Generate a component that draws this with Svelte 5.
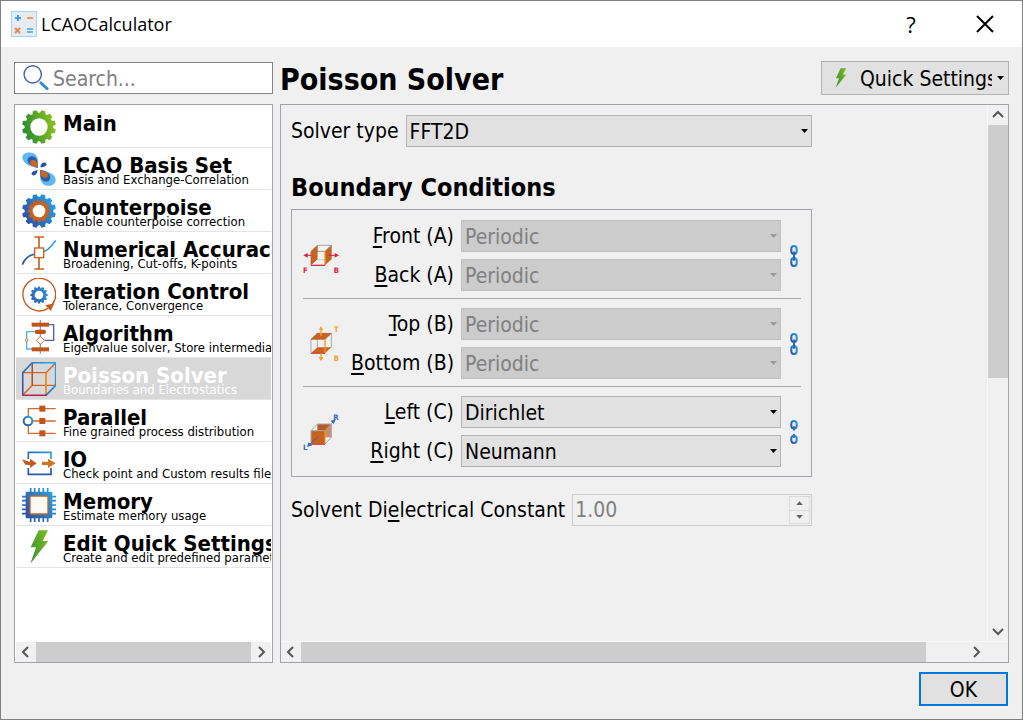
<script>
  const gear = (cx, cy, inner, outer, teeth, phase = 0) => {
    const step = (Math.PI * 2) / teeth;
    const profile = [[-0.38, inner], [-0.22, outer], [0.22, outer], [0.38, inner]];
    const points = [];
    for (let i = 0; i < teeth; i++) {
      for (const [offset, r] of profile) {
        const a = (i + offset + phase) * step - Math.PI / 2;
        points.push(`${(cx + r * Math.cos(a)).toFixed(1)} ${(cy + r * Math.sin(a)).toFixed(1)}`);
      }
    }
    return `M${points.join('L')}Z`;
  };
  const hole = (c, r) => `M${c - r} ${c}a${r} ${r} 0 1 0 ${2 * r} 0a${r} ${r} 0 1 0 ${-2 * r} 0Z`;

  const pages = [
    { id: 'main', title: 'Main', note: '' },
    { id: 'basis', title: 'LCAO Basis Set', note: 'Basis and Exchange-Correlation' },
    { id: 'counterpoise', title: 'Counterpoise', note: 'Enable counterpoise correction' },
    { id: 'accuracy', title: 'Numerical Accuracy', note: 'Broadening, Cut-offs, K-points' },
    { id: 'iteration', title: 'Iteration Control', note: 'Tolerance, Convergence' },
    { id: 'algorithm', title: 'Algorithm', note: 'Eigenvalue solver, Store intermediate' },
    { id: 'poisson', title: 'Poisson Solver', note: 'Boundaries and Electrostatics' },
    { id: 'parallel', title: 'Parallel', note: 'Fine grained process distribution' },
    { id: 'io', title: 'IO', note: 'Check point and Custom results files' },
    { id: 'memory', title: 'Memory', note: 'Estimate memory usage' },
    { id: 'quick', title: 'Edit Quick Settings', note: 'Create and edit predefined parameters' }
  ];
  let selected = $state('poisson');

  const groups = [
    { axis: 'A', linked: true, sides: [['Front', 'Periodic'], ['Back', 'Periodic']] },
    { axis: 'B', linked: true, sides: [['Top', 'Periodic'], ['Bottom', 'Periodic']] },
    { axis: 'C', linked: false, sides: [['Left', 'Dirichlet'], ['Right', 'Neumann']] }
  ];
  const conditions = ['Periodic', 'Dirichlet', 'Neumann'];
</script>

{#snippet chevron(d)}
  <svg class="chev" viewBox="0 0 12 12" aria-hidden="true"><path {d} /></svg>
{/snippet}

{#snippet bolt()}
  <path d="M50 1H78L62 33H79L25 101L42 52H26Z" fill="url(#green)" />
{/snippet}

{#snippet pageIcon(id)}
  <svg class="page-icon" viewBox="0 0 102 102" aria-hidden="true">
    {#if id === 'main'}
      <path d={gear(51, 51, 43, 51, 12, 0.5) + hole(51, 26)} fill="url(#green)" fill-rule="evenodd" />
    {:else if id === 'basis'}
      <path d="M48 48C26 45 2 34 1 17C0 4 18-2 33 3C50 10 49 30 48 48Z" fill="#5fb8ee" />
      <path d="M47 47C28 43 14 34 17 21C21 10 39 10 44 22C47 30 47 38 47 47Z" fill="#2c5dad" />
      <path d="M47 47C30 43 21 38 25 29C30 21 43 24 45 33Z" fill="#cf6321" />
      <path d="M54 53C76 56 101 66 101 84C101 98 85 105 70 100C52 92 53 72 54 53Z" fill="#5fb8ee" />
      <path d="M55 54C76 58 88 67 84 81C80 92 64 91 58 80C54 72 55 63 55 54Z" fill="#2c5dad" />
      <path d="M55 54C72 58 81 64 77 74C72 81 60 77 57 69Z" fill="#cf6321" />
      <path d="M55 46C56 34 64 29 72 33C78 40 67 46 55 46Z" fill="#2456a8" />
      <path d="M47 55C45 68 38 73 30 69C25 62 34 56 47 55Z" fill="#2456a8" />
      <path d="M51 39V63M40 51H63" stroke="#fff" stroke-width="4" />
    {:else if id === 'counterpoise'}
      <path d={gear(51, 51, 43, 51, 12, 0.5)} fill="url(#blue)" />
      <path d={gear(51, 51, 28, 34, 12)} fill="#c9601d" />
      <circle cx="51" cy="51" r="19" fill="#fff" />
    {:else if id === 'accuracy'}
      <path d="M1 86C12 58 33 54 50 52S85 38 101 13" fill="none" stroke="url(#blue)" stroke-width="5" />
      <path d="M51 3V99M37 3H66M37 99H66" stroke="#c9601d" stroke-width="5" />
      <rect x="38" y="36" width="27" height="29" fill="#fff" stroke="#c9601d" stroke-width="4" />
    {:else if id === 'iteration'}
      <path d="M78 91A49 49 0 1 1 91 79" fill="none" stroke="#c4591d" stroke-width="4" />
      <path d="M70 82L97 76L86 99Z" fill="#c4591d" />
      <path d={gear(51, 51, 21, 26, 12) + hole(51, 13)} fill="url(#blue)" fill-rule="evenodd" />
    {:else if id === 'algorithm'}
      <path d="M55 0V101M38 35H14V87H30" fill="none" stroke="#55aee0" stroke-width="4" />
      <path d="M68 14H95V61H68" fill="none" stroke="#4c63ad" stroke-width="4" />
      <rect x="29" y="8" width="52" height="12" fill="#c4531a" />
      <rect x="38" y="29" width="34" height="13" rx="6" fill="#c4531a" />
      <rect x="29" y="82" width="52" height="12" fill="#c4531a" />
      <path d="M55 49L67 61L55 73L43 61Z" fill="#fff" stroke="#cf6a35" stroke-width="3" />
      <circle cx="14" cy="61" r="4" fill="#fff" stroke="#cf6a35" stroke-width="3" />
    {:else if id === 'poisson'}
      <path d="M2 32H72V100M72 32L101 3M31 3V70H101M31 70L2 100" fill="none" stroke="#cf6321" stroke-width="4" />
      <path d="M31 70V3" stroke="#a65032" stroke-width="4" />
      <path d="M72 32V100" stroke="#f39a26" stroke-width="4" />
      <path d="M2 100V32L31 2H101V70L72 100" fill="none" stroke="url(#blue)" stroke-width="5" />
      <path d="M1 100H74" stroke="#b51e48" stroke-width="5" />
    {:else if id === 'parallel'}
      <path d="M19 38V14H101M30 51H101M19 64V88H101" fill="none" stroke="#cf6b39" stroke-width="4" />
      <rect x="52" y="5" width="18" height="18" fill="#c4531a" />
      <rect x="52" y="42" width="18" height="18" fill="#c4531a" />
      <rect x="52" y="79" width="18" height="18" fill="#c4531a" />
      <circle cx="18" cy="51" r="13" fill="#fff" stroke="url(#bluelink)" stroke-width="6" />
    {:else if id === 'io'}
      <path d="M19 39V19H87V39" fill="none" stroke="url(#blue)" stroke-width="5" />
      <path d="M19 66V85H87V66" fill="none" stroke="#2e55a8" stroke-width="5" />
      <path d="M0 40L24 48V38L44 52L24 66V57L10 56Z" fill="#c4591d" />
      <path d="M60 47H78V38L101 52L78 66V57H60Z" fill="#cf7422" />
    {:else if id === 'memory'}
      <path d="M26 0V102M38 0V102M51 0V102M64 0V102M77 0V102M0 26H102M0 38H102M0 51H102M0 64H102M0 77H102" stroke="url(#blueflat)" stroke-width="5" />
      <rect x="11" y="11" width="80" height="80" rx="3" fill="url(#blue)" />
      <rect x="24" y="24" width="54" height="54" rx="3" fill="#fff9f3" stroke="#c4651f" stroke-width="4" />
    {:else}
      {@render bolt()}
    {/if}
  </svg>
{/snippet}

{#snippet axisIcon(axis)}
  <svg class="axis-icon" viewBox="0 0 108 108" aria-hidden="true">
    {#if axis === 'A'}
      <path d="M43 22H85V65H43Z" fill="#f4f4f4" stroke="#a5a9ac" stroke-width="3" />
      <path d="M24 40L43 22V64L24 82Z" fill="#c8621f" />
      <path d="M66 40L85 22V64L66 82Z" fill="#c8621f" />
      <path d="M24 40H66V82H24Z" fill="#f4f4f4" fill-opacity=".5" />
      <path d="M24 82V40H66L85 22" fill="none" stroke="#8c9196" stroke-width="3" />
      <path d="M24 40L43 22V64L24 82Z" fill="#c8621f" />
      <path d="M66 40V82" stroke="#f3982a" stroke-width="4" />
      <path d="M24 82H66" stroke="#d9304b" stroke-width="4" />
      <path d="M10 52H24M76 52H96" stroke="#dc1f3c" stroke-width="3" />
      <path d="M1 52L14 45V59ZM108 52L95 45V59Z" fill="#dc1f3c" />
      <text x="0" y="105" fill="#dc1f3c">F</text><text x="92" y="105" fill="#dc1f3c">B</text>
    {:else if axis === 'B'}
      <path d="M43 22V64M24 40V82M85 22V64" stroke="#a5a9ac" stroke-width="3" />
      <path d="M24 40L43 22H85L66 40Z" fill="#c8621f" stroke="#a95727" stroke-width="2" />
      <path d="M24 82L43 64H85L66 82Z" fill="#c8621f" />
      <path d="M66 40V82" stroke="#f3982a" stroke-width="4" />
      <path d="M24 82H66" stroke="#c93a38" stroke-width="3" />
      <path d="M54 8V31M54 82V96" stroke="#f3a331" stroke-width="4" />
      <path d="M54 0L61 13H47ZM54 106L61 93H47Z" fill="#f3a331" />
      <text x="93" y="17" fill="#f3a331">T</text><text x="92" y="106" fill="#f3a331">B</text>
    {:else}
      <path d="M43 30H85V70H43Z" fill="#b85a22" />
      <path d="M24 50H66V90H24Z" fill="#c8621f" />
      <path d="M66 50L85 30V70L66 90Z" fill="#f0f0f0" fill-opacity=".35" />
      <path d="M24 50L43 30H85L66 50M85 30V70L66 90M24 90V50H66" fill="none" stroke="#a5a9ac" stroke-width="3" />
      <path d="M66 50V90" stroke="#f3982a" stroke-width="3" />
      <path d="M24 91H66" stroke="#d9304b" stroke-width="3" />
      <path d="M44 69L20 92M86 28L92 22" stroke="#40639a" stroke-width="3" />
      <path d="M12 99L17 85L28 94ZM99 14L83 21L92 30Z" fill="#346bb4" />
      <text x="0" y="107" fill="#346bb4">L</text><text x="91" y="18" fill="#346bb4">R</text>
    {/if}
  </svg>
{/snippet}

{#snippet linkIcon(linked)}
  <svg class="link-icon" viewBox="0 0 24 72" aria-hidden="true">
    {#if linked}
      <rect x="4" y="6" width="16" height="24" rx="8" fill="none" stroke="url(#bluelink)" stroke-width="6" />
      <rect x="4" y="42" width="16" height="24" rx="8" fill="none" stroke="url(#bluelink)" stroke-width="6" />
      <path d="M12 25V48" stroke="#2567b7" stroke-width="6" stroke-linecap="round" />
    {:else}
      <rect x="4" y="3" width="16" height="22" rx="8" fill="none" stroke="url(#bluelink)" stroke-width="6" />
      <rect x="4" y="47" width="16" height="22" rx="8" fill="none" stroke="url(#bluelink)" stroke-width="6" />
      <path d="M12 21V29M12 44V51" stroke="#2378c4" stroke-width="6" stroke-linecap="round" />
    {/if}
  </svg>
{/snippet}

{#snippet hbar(fill)}
  <div class="hbar">
    <button aria-label="Scroll left">{@render chevron('M8 1L3 6L8 11')}</button>
    <div class="track"><div class="thumb" style:width={fill}></div></div>
    <button aria-label="Scroll right">{@render chevron('M4 1L9 6L4 11')}</button>
  </div>
{/snippet}

<svg class="defs" aria-hidden="true">
  <defs>
    <linearGradient id="green" gradientUnits="userSpaceOnUse" x1="10" y1="60" x2="92" y2="40"><stop stop-color="#2f8f2f" /><stop offset="1" stop-color="#86bd23" /></linearGradient>
    <linearGradient id="blue" gradientUnits="userSpaceOnUse" x1="8" y1="80" x2="94" y2="22"><stop stop-color="#2d4fa5" /><stop offset="1" stop-color="#27a0e4" /></linearGradient>
    <linearGradient id="blueflat" gradientUnits="userSpaceOnUse" x1="0" y1="102" x2="102" y2="0"><stop stop-color="#2d4fa5" /><stop offset="1" stop-color="#27a0e4" /></linearGradient>
    <linearGradient id="bluelink" x1="0" y1="1" x2="1" y2="0"><stop stop-color="#2b50a6" /><stop offset="1" stop-color="#249fe2" /></linearGradient>
  </defs>
</svg>

<div class="window">
  <header>
    <svg class="app-icon" viewBox="0 0 26 26" aria-hidden="true">
      <rect x=".5" y=".5" width="25" height="25" fill="#e9eaec" stroke="#a9d3ee" />
      <path d="M1 1H13V13H1ZM13 13H25V25H13Z" fill="#e3eef6" />
      <path d="M4 7H10M7 4V10" stroke="#4b9bd8" stroke-width="2" />
      <path d="M16 7H22" stroke="#df9a70" stroke-width="2" />
      <path d="M4 17L9 22M9 17L4 22" stroke="#dd8a55" stroke-width="2" />
      <path d="M16 18H22M16 21H22" stroke="#74b2e2" stroke-width="2" />
    </svg>
    <span class="caption">LCAOCalculator</span>
    <button class="help" aria-label="Help">?</button>
    <button class="close" aria-label="Close"><svg viewBox="0 0 18 18" aria-hidden="true"><path d="M1 1L17 17M17 1L1 17" /></svg></button>
  </header>

  <main>
    <aside>
      <label class="search">
        <svg viewBox="0 0 75 75" aria-hidden="true">
          <path d="M49 49L72 71" stroke="#2b8bd2" stroke-width="8" />
          <circle cx="28" cy="27" r="25" fill="#fff" stroke="#4a62b0" stroke-width="4" />
        </svg>
        <input type="text" placeholder="Search..." aria-label="Search" />
      </label>
      <div class="list-box">
        <nav>
          {#each pages as page}
            <button class="page" class:active={selected === page.id} onclick={() => (selected = page.id)}>
              {@render pageIcon(page.id)}
              <span class="words">
                <strong>{page.title}</strong>
                <small>{page.note}</small>
              </span>
            </button>
          {/each}
        </nav>
        {@render hbar('100%')}
      </div>
    </aside>

    <section class="content">
      <div class="top">
        <h1>Poisson Solver</h1>
        <button class="quick">
          <svg class="bolt" viewBox="22 0 60 102" aria-hidden="true">{@render bolt()}</svg>
          <span>Quick Settings</span>
          <i class="arrow"></i>
        </button>
      </div>

      <div class="panel">
        <div class="view">
          <form>
            <div class="line solver">
              <label for="solver">Solver type</label>
              <div class="combo">
                <select id="solver"><option>FFT2D</option></select>
                <i class="arrow"></i>
              </div>
            </div>
            <h2>Boundary Conditions</h2>
            <div class="bounds">
              {#each groups as group}
                <div class="group">
                  {@render axisIcon(group.axis)}
                  <div class="fields">
                    {#each group.sides as [side, value]}
                      <label for={side}><u>{side[0]}</u>{side.slice(1)} ({group.axis})</label>
                      <div class="combo">
                        <select id={side} {value} disabled={group.linked}>
                          {#each conditions as condition}<option>{condition}</option>{/each}
                        </select>
                        <i class="arrow"></i>
                      </div>
                    {/each}
                  </div>
                  {@render linkIcon(group.linked)}
                </div>
              {/each}
            </div>
            <div class="line">
              <label for="dielectric">Solvent Di<u>e</u>lectrical Constant</label>
              <div class="spin">
                <input id="dielectric" type="text" value="1.00" disabled />
                <div class="steps">
                  <button type="button" disabled aria-label="Increase"><i class="arrow up"></i></button>
                  <button type="button" disabled aria-label="Decrease"><i class="arrow"></i></button>
                </div>
              </div>
            </div>
          </form>
          <div class="vbar">
            <button aria-label="Scroll up">{@render chevron('M1 8L6 3L11 8')}</button>
            <div class="track"><div class="thumb" style:height="51%"></div></div>
            <button aria-label="Scroll down">{@render chevron('M1 4L6 9L11 4')}</button>
          </div>
        </div>
        <div class="foot">{@render hbar('94%')}</div>
      </div>
    </section>
  </main>

  <footer><button class="ok">OK</button></footer>
</div>

<style>
  :global(body) {
    margin: 0;
  }
  .window,
  .window * {
    box-sizing: border-box;
  }
  .window {
    display: flex;
    flex-direction: column;
    min-height: 100vh;
    border: 1px solid #808080;
    background: #f0f0f0;
    color: #000;
    font: 21px/32px "DejaVu Sans Condensed", "DejaVu Sans", sans-serif;
  }
  .defs {
    position: absolute;
    width: 0;
    height: 0;
  }
  button,
  input,
  select {
    margin: 0;
    padding: 0;
    border: 0;
    border-radius: 0;
    background: none;
    color: inherit;
    font: inherit;
  }
  svg {
    display: block;
    flex: none;
  }

  header {
    display: flex;
    align-items: center;
    height: 46px;
    padding-left: 10px;
    background: #fff;
    font-family: "Open Sans", "Noto Sans", sans-serif;
    font-size: 18px;
  }
  .app-icon {
    width: 26px;
    height: 26px;
  }
  .caption {
    flex: 1;
    margin-left: 4px;
  }
  .help,
  .close {
    display: flex;
    align-items: center;
    justify-content: center;
    width: 74px;
    height: 46px;
    font-size: 22px;
  }
  .close svg {
    width: 18px;
    height: 18px;
    fill: none;
    stroke: #000;
    stroke-width: 2;
  }

  main {
    flex: 1;
    display: grid;
    grid-template-columns: 259px minmax(0, 1fr);
    gap: 7px;
    padding: 14px 13px 0;
  }
  aside,
  .content {
    display: flex;
    flex-direction: column;
    min-width: 0;
  }
  .search {
    display: flex;
    align-items: center;
    gap: 4px;
    height: 32px;
    margin: 1px 0 10px;
    padding-left: 8px;
    border: 1px solid #858585;
    background: #fff;
  }
  .search svg {
    width: 26px;
    height: 26px;
  }
  .search input {
    flex: 1;
    min-width: 0;
    padding-top: 2px;
    outline: 0;
  }
  .search input::placeholder {
    color: #808080;
    opacity: 1;
  }
  .list-box {
    flex: 1;
    display: flex;
    flex-direction: column;
    padding: 1px 1px 0;
    border: 1px solid #a0a3aa;
    background: #fff;
  }
  nav {
    flex: 1;
  }
  .page {
    display: flex;
    align-items: center;
    gap: 7px;
    width: 100%;
    height: 42px;
    padding-left: 6px;
    overflow: hidden;
    border-bottom: 1px solid #e4e4e4;
    text-align: left;
    white-space: nowrap;
  }
  .page.active {
    background: #d8d8d8;
    color: #fff;
  }
  .page-icon {
    width: 34px;
    height: 34px;
  }
  .words {
    display: flex;
    flex-direction: column;
    height: 38px;
  }
  .words strong {
    font-size: 22px;
    line-height: 32px;
  }
  .words small {
    margin-top: -8px;
    font-size: 13px;
    line-height: 12px;
  }

  .hbar {
    display: flex;
    height: 20px;
    background: #f0f0f0;
  }
  .vbar {
    display: flex;
    flex-direction: column;
    width: 21px;
    border-left: 1px solid #f8f8f8;
  }
  .hbar button,
  .vbar button {
    display: flex;
    align-items: center;
    justify-content: center;
    width: 20px;
    height: 20px;
  }
  .track {
    flex: 1;
  }
  .thumb {
    width: 100%;
    height: 100%;
    background: #cdcdcd;
  }
  .chev {
    width: 12px;
    height: 12px;
    fill: none;
    stroke: #555;
    stroke-width: 2;
  }

  .top {
    display: flex;
    align-items: center;
    justify-content: space-between;
    margin-bottom: 9px;
  }
  h1,
  h2 {
    margin: 0;
    font-weight: bold;
    white-space: nowrap;
  }
  h1 {
    padding-top: 4px;
    font-size: 30px;
    line-height: 30px;
  }
  h2 {
    margin: 25px 0 5px;
    font-size: 25px;
    line-height: 32px;
  }
  .quick {
    display: flex;
    align-items: center;
    width: 188px;
    height: 34px;
    padding: 0 4px 0 13px;
    border: 1px solid #b4b4b4;
    background: #e1e1e1;
  }
  .bolt {
    width: 12px;
    height: 20px;
  }
  .quick span {
    flex: 1;
    margin: 0 5px 0 13px;
    padding-top: 2px;
    overflow: hidden;
    text-align: left;
    white-space: nowrap;
  }
  .arrow {
    display: block;
    width: 7px;
    height: 4px;
    background: currentColor;
    clip-path: polygon(0 0, 100% 0, 50% 100%);
  }
  .arrow.up {
    clip-path: polygon(0 100%, 100% 100%, 50% 0);
  }
  .panel {
    flex: 1;
    display: flex;
    flex-direction: column;
    border: 1px solid #a0a3aa;
  }
  .view {
    flex: 1;
    display: flex;
  }
  form {
    flex: 1;
    min-width: 0;
    padding: 10px;
  }
  .foot {
    padding-right: 22px;
    border-top: 1px solid #f8f8f8;
  }
  .line,
  .bounds {
    max-width: 521px;
  }
  .line {
    display: flex;
    align-items: center;
    gap: 7px;
  }
  .line label {
    white-space: nowrap;
  }
  .combo {
    position: relative;
    flex: 1;
    min-width: 0;
  }
  .combo select {
    display: block;
    width: 100%;
    height: 32px;
    padding: 0 16px 0 3px;
    appearance: none;
    border: 1px solid #b4b4b4;
    background: #e1e1e1;
    opacity: 1;
  }
  .combo .arrow {
    position: absolute;
    top: 14px;
    right: 4px;
    pointer-events: none;
  }
  .combo select:disabled {
    border-color: #c0c0c0;
    background: #ccc;
    color: #808080;
  }
  .combo select:disabled + .arrow {
    background: #999;
  }
  .bounds {
    margin-bottom: 17px;
    padding: 1px 10px 9px 11px;
    border: 1px solid #a0a3aa;
  }
  .group {
    display: grid;
    grid-template-columns: 37px minmax(0, 1fr) 11px;
    align-items: center;
    padding: 9px 0 7px;
  }
  .group + .group {
    border-top: 1px solid #a8a8a8;
  }
  .group:last-child {
    padding-bottom: 0;
  }
  .fields {
    display: grid;
    grid-template-columns: 114px minmax(0, 1fr);
    gap: 7px;
    margin-right: 9px;
  }
  .fields label {
    text-align: right;
    white-space: nowrap;
  }
  .axis-icon {
    width: 36px;
    height: 36px;
  }
  .axis-icon text {
    font: bold 23px "DejaVu Sans Condensed", sans-serif;
  }
  .link-icon {
    width: 8px;
    height: 24px;
  }
  u {
    text-decoration-thickness: 2px;
    text-underline-offset: 3px;
  }
  .spin {
    flex: 1;
    display: flex;
    min-width: 0;
    height: 32px;
    padding: 1px;
    border: 1px solid #ccc;
  }
  .spin input {
    flex: 1;
    min-width: 0;
    padding-left: 1px;
    color: #808080;
  }
  .steps {
    display: flex;
    flex-direction: column;
    width: 21px;
    border: 1px solid #dadada;
  }
  .steps button {
    flex: 1;
    display: flex;
    align-items: center;
    justify-content: center;
    color: #606060;
  }
  .steps button + button {
    border-top: 1px solid #dadada;
  }

  footer {
    display: flex;
    justify-content: flex-end;
    padding: 9px 14px 13px;
  }
  .ok {
    width: 89px;
    height: 34px;
    border: 2px solid #0078d7;
    background: #e1e1e1;
  }
</style>
